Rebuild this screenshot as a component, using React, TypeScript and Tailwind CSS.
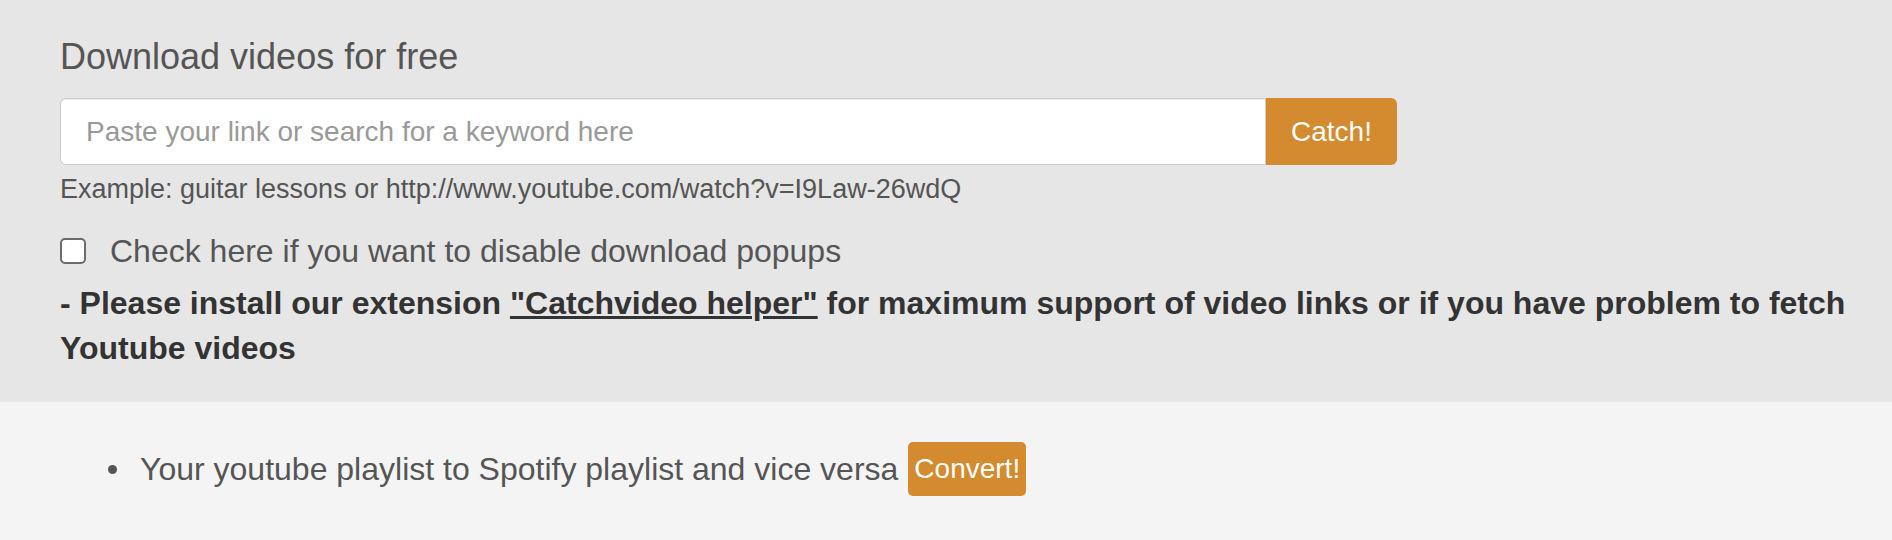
export default function App() {
  return (
    <div className="min-h-[540px] bg-[#f4f4f4] font-['Liberation_Sans',Arial,sans-serif]">
      {/* search area */}
      <section className="bg-[#e6e6e6] pl-[60px] pr-[20px] pt-[37px] pb-[31px]">
        <h3 className="text-[36px] leading-[40px] text-[#555]">Download videos for free</h3>

        <form className="mt-[21px] flex h-[67px] w-[1337px]" onSubmit={(e) => e.preventDefault()}>
          <input
            type="text"
            placeholder="Paste your link or search for a keyword here"
            className="h-full w-[1206px] rounded-l-[6px] border border-[#cccccc] bg-white px-[25px] text-[28px] text-[#555] shadow-[inset_0_1px_1px_rgba(0,0,0,0.075)] outline-none placeholder:text-[#999]"
          />
          <button
            type="submit"
            className="h-full w-[131px] rounded-r-[6px] bg-[#d48a2f] text-[28px] text-white"
          >
            Catch!
          </button>
        </form>

        <p className="mt-[8px] text-[27px] leading-[32px] text-[#555]">
          Example: guitar lessons or http://www.youtube.com/watch?v=I9Law-26wdQ
        </p>

        <label className="mt-[28px] flex h-[36px] items-center gap-[24px] text-[32px] leading-[36px] text-[#555]">
          <span className="h-[26px] w-[26px] shrink-0 rounded-[5px] border-2 border-[#6b6b6b] bg-white" />
          <span>Check here if you want to disable download popups</span>
        </label>

        <p className="mt-[12px] text-[32px] font-bold leading-[45px] text-[#333]">
          <span>- Please install our extension </span>
          <a href="#" className="underline">
            "Catchvideo helper"
          </a>
          <span> for maximum support of video links or if you have problem to fetch</span>{' '}
          <span>Youtube videos</span>
        </p>
      </section>

      {/* extras */}
      <section className="pt-[40px] pb-[44px]">
        <div className="flex h-[54px] items-center pl-[108px]">
          <span className="h-[9px] w-[9px] shrink-0 rounded-full bg-[#555]" />
          <span className="ml-[23px] text-[32px] text-[#555]">
            Your youtube playlist to Spotify playlist and vice versa
          </span>
          <button className="ml-[10px] h-[54px] rounded-[5px] bg-[#d48a2f] px-[6px] text-[28px] text-white">
            Convert!
          </button>
        </div>
      </section>
    </div>
  );
}
